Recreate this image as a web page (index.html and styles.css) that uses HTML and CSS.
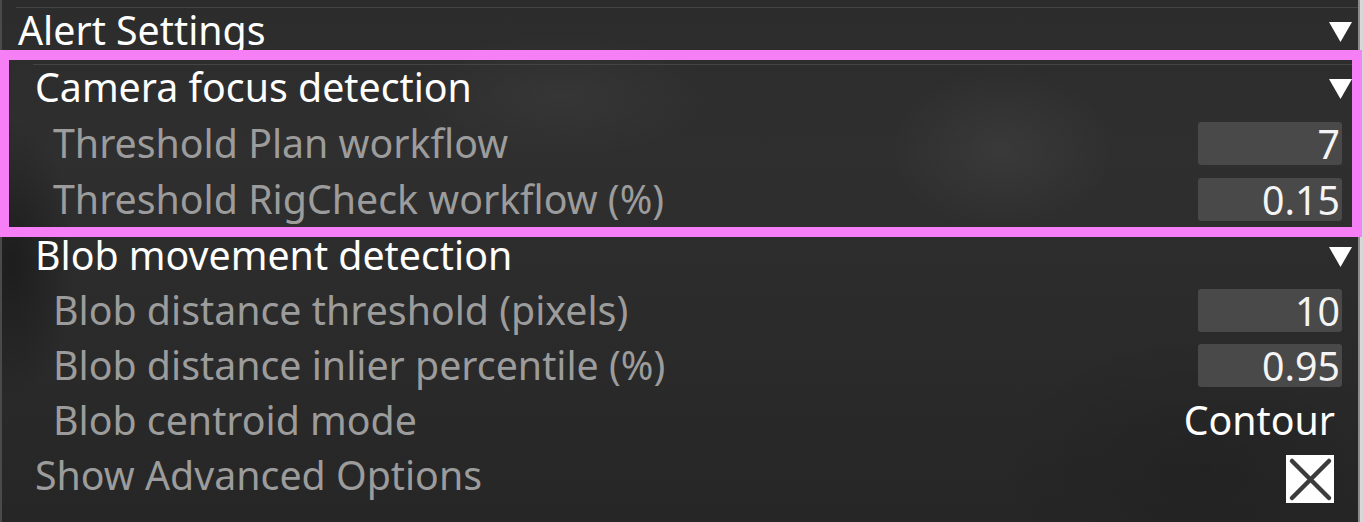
FILE: index.html
```html
<!DOCTYPE html>
<html lang="en">
<head>
<meta charset="utf-8">
<title>Alert Settings</title>
<link rel="stylesheet" href="styles.css">
</head>
<body>
<div class="panel">
  <div class="row header level0 first">
    <span class="label">Alert Settings</span>
    <svg class="tri" viewBox="0 0 23 20" width="23" height="20"><polygon points="0,0 23,0 11.5,20" fill="#fff"/></svg>
  </div>

  <div class="group highlighted">
    <div class="row header level1">
      <span class="label">Camera focus detection</span>
      <svg class="tri" viewBox="0 0 23 20" width="23" height="20"><polygon points="0,0 23,0 11.5,20" fill="#fff"/></svg>
    </div>
    <div class="row level2">
      <span class="label sub">Threshold Plan workflow</span>
      <span class="input">7</span>
    </div>
    <div class="row level2">
      <span class="label sub">Threshold RigCheck workflow (%)</span>
      <span class="input">0.15</span>
    </div>
  </div>

  <div class="group plain">
    <div class="row header level1">
      <span class="label">Blob movement detection</span>
      <svg class="tri" viewBox="0 0 23 20" width="23" height="20"><polygon points="0,0 23,0 11.5,20" fill="#fff"/></svg>
    </div>
    <div class="row level2">
      <span class="label sub">Blob distance threshold (pixels)</span>
      <span class="input">10</span>
    </div>
    <div class="row level2">
      <span class="label sub">Blob distance inlier percentile (%)</span>
      <span class="input">0.95</span>
    </div>
    <div class="row level2">
      <span class="label sub">Blob centroid mode</span>
      <span class="combo">Contour</span>
    </div>
  </div>

  <div class="row level1 advanced">
    <span class="label sub">Show Advanced Options</span>
    <svg class="check" viewBox="0 0 48 48" width="48" height="48">
      <rect x="0" y="0" width="48" height="48" fill="#ffffff"/>
      <path d="M6 6 L43 43 M43 6 L6 43" stroke="#3c3c3c" stroke-width="4.5" stroke-linecap="round" fill="none"/>
    </svg>
  </div>
</div>
</body>
</html>
```

FILE: styles.css
```css
html, body {
  margin: 0;
  padding: 0;
}

body {
  background: #d8d8d8;
  width: 1363px;
  height: 522px;
  overflow: hidden;
  font-family: "Noto Sans", "Open Sans", sans-serif;
  font-size: 39.3px;
  color: #ffffff;
}

.panel {
  box-sizing: border-box;
  width: 1360px;
  height: 522px;
  border-left: 2px solid #4a4a4a;
  border-right: 2px solid #8c8c8c;
  background:
    radial-gradient(ellipse 160px 120px at 1000px 150px, rgba(255,255,255,0.05), rgba(255,255,255,0) 70%),
    radial-gradient(ellipse 220px 90px at 560px 95px, rgba(255,255,255,0.04), rgba(255,255,255,0) 70%),
    radial-gradient(ellipse 90px 200px at 10px 260px, rgba(0,0,0,0.35), rgba(0,0,0,0) 70%),
    radial-gradient(ellipse 300px 200px at 1200px 470px, rgba(0,0,0,0.12), rgba(0,0,0,0) 70%),
    linear-gradient(180deg, #2c2c2c 0%, #2f2f2f 30%, #2a2a2a 70%, #262626 100%);
  padding-top: 7px;
  display: flex;
  flex-direction: column;
}

.row {
  display: flex;
  align-items: center;
  justify-content: space-between;
  height: 44px;
  line-height: 44px;
  white-space: nowrap;
}

.label {
  padding-left: 2px;
}

.sub {
  color: #9c9c9c;
}

.header {
  border-top: 1px solid #444444;
  padding-right: 6px;
}

.level0 {
  margin-left: 14px;
}

.level1 {
  margin-left: 31px;
}

.level2 {
  margin-left: 49px;
}

.tri {
  display: block;
  margin-top: 3px;
}

.group {
  display: flex;
  flex-direction: column;
  gap: 12px;
}

.highlighted {
  position: relative;
  margin-top: 8px;
  padding: 4px 0 6px 0;
}

.highlighted::after {
  content: "";
  position: absolute;
  top: -10px;
  bottom: -10px;
  left: -3px;
  right: -4px;
  border: 10px solid #f67ff6;
  pointer-events: none;
}

.plain {
  margin-top: 5px;
  gap: 11px;
}

.input {
  box-sizing: border-box;
  width: 144px;
  height: 43px;
  line-height: 44px;
  background: #494949;
  border-radius: 3px;
  text-align: right;
  padding-right: 2px;
  margin-right: 16px;
  color: #f4f4f4;
}

.combo {
  color: #ffffff;
  margin-right: 23px;
}

.advanced {
  height: 48px;
  align-items: flex-start;
  margin-top: 11px;
}

.check {
  display: block;
  margin-top: 2px;
  margin-right: 24px;
}
```
